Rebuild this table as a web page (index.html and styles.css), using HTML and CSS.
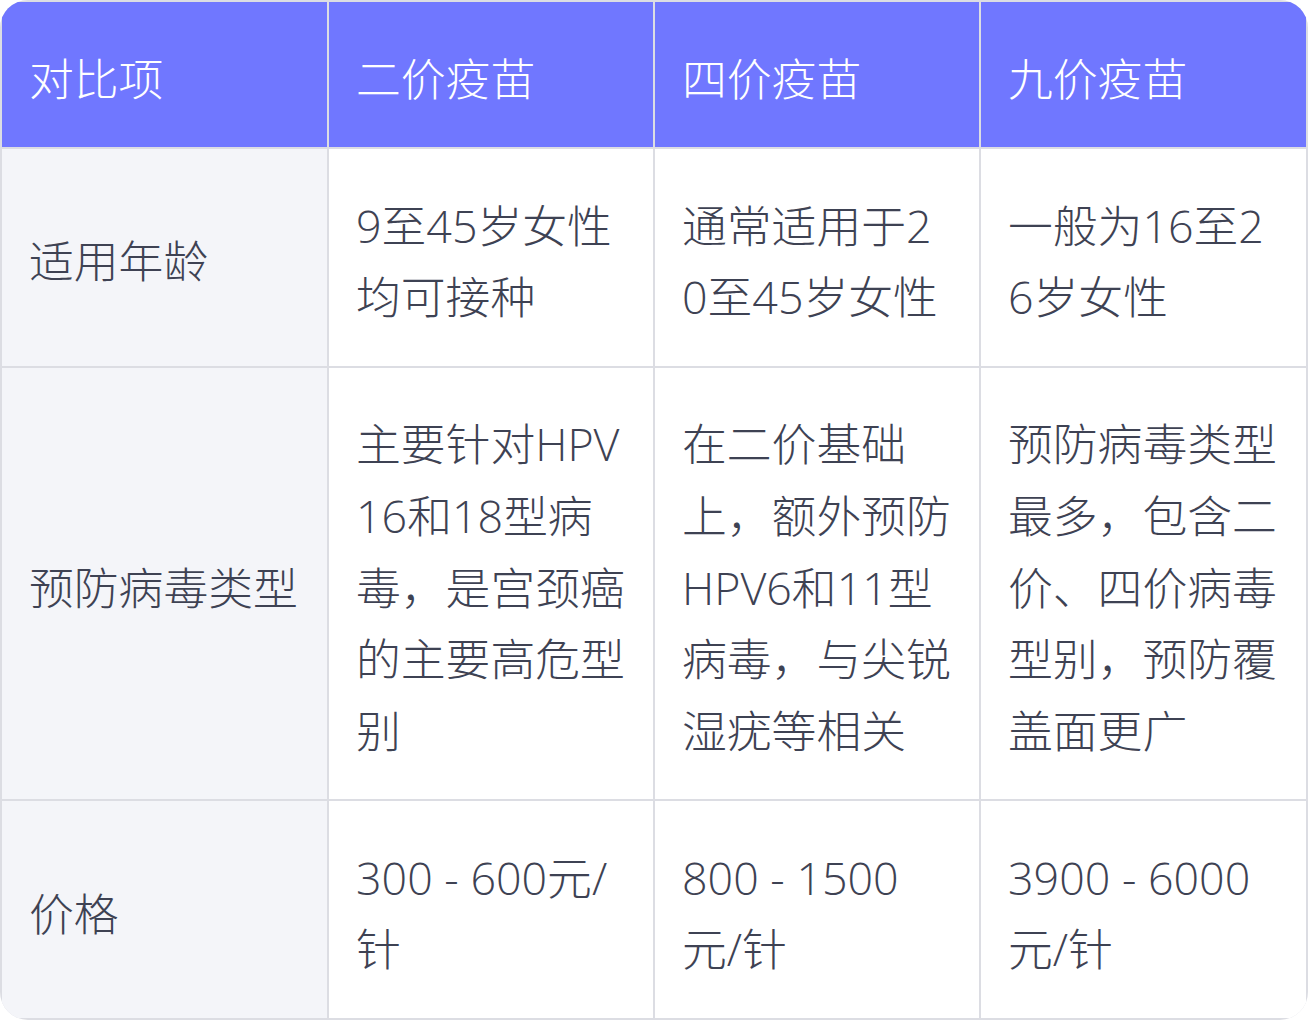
FILE: index.html
```html
<!DOCTYPE html>
<html lang="zh-CN">
<head>
<meta charset="utf-8">
<title>HPV疫苗对比</title>
<link rel="stylesheet" href="styles.css">
</head>
<body>
<div class="table-wrap">
  <table class="compare">
    <colgroup>
      <col class="col-edge">
      <col class="col-mid">
      <col class="col-mid">
      <col class="col-edge">
    </colgroup>
    <thead>
      <tr>
        <th>对比项</th>
        <th>二价疫苗</th>
        <th>四价疫苗</th>
        <th>九价疫苗</th>
      </tr>
    </thead>
    <tbody>
      <tr>
        <td class="label">适用年龄</td>
        <td>9至45岁女性均可接种</td>
        <td>通常适用于20至45岁女性</td>
        <td>一般为16至26岁女性</td>
      </tr>
      <tr>
        <td class="label">预防病毒类型</td>
        <td>主要针对HPV16和18型病毒，是宫颈癌的主要高危型别</td>
        <td>在二价基础上，额外预防HPV6和11型病毒，与尖锐湿疣等相关</td>
        <td>预防病毒类型最多，包含二价、四价病毒型别，预防覆盖面更广</td>
      </tr>
      <tr>
        <td class="label">价格</td>
        <td>300 - 600元/针</td>
        <td>800 - 1500元/针</td>
        <td>3900 - 6000元/针</td>
      </tr>
    </tbody>
  </table>
</div>
</body>
</html>
```

FILE: styles.css
```css
html, body {
  margin: 0;
  padding: 0;
  background: #ffffff;
}

.table-wrap {
  width: 1308px;
  border-radius: 28px;
  overflow: hidden;
  background: #dcdde3;
}

.compare {
  width: 1308px;
  border-collapse: separate;
  border-spacing: 2px;
  table-layout: fixed;
  background: #dcdde3;
  font-family: "Open Sans", "Noto Sans CJK SC", sans-serif;
  font-weight: 300;
  font-size: 44.8px;
  line-height: 1.6;
  color: #3e4253;
}

.col-edge {
  width: 325px;
}

.col-mid {
  width: 324px;
}

.compare th,
.compare td {
  padding: 40.6px 27px 32.7px;
  text-align: left;
  vertical-align: top;
  word-break: break-all;
}

.compare th {
  background: #7077ff;
  color: #ffffff;
  font-weight: 300;
}

.compare td {
  background: #ffffff;
}

.compare td.label {
  background: #f4f5f9;
  vertical-align: middle;
}
```
